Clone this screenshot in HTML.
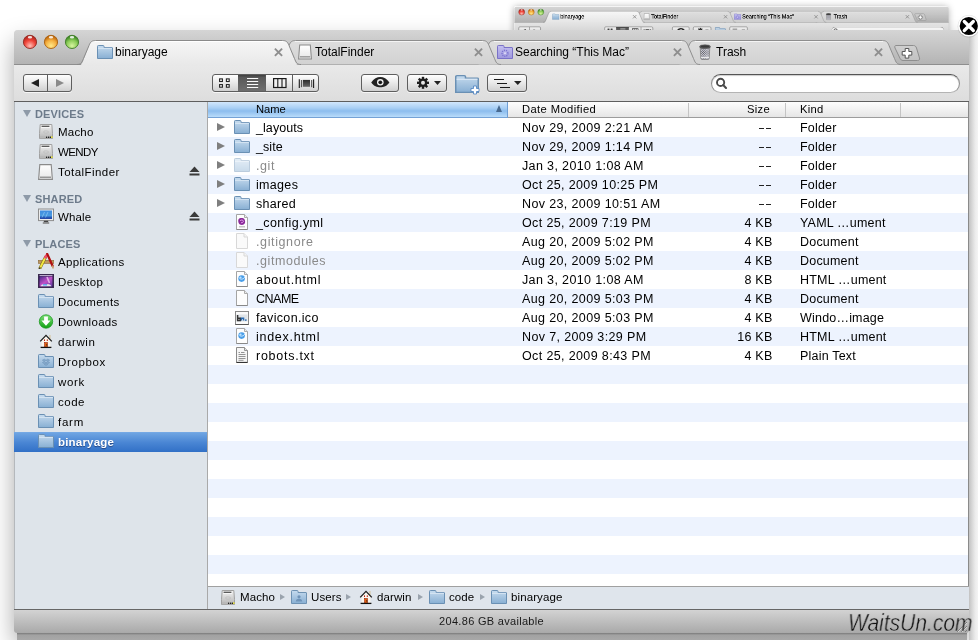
<!DOCTYPE html><html><head><meta charset="utf-8"><style>
*{box-sizing:border-box}
html,body{margin:0;padding:0}
body{width:978px;height:640px;position:relative;overflow:hidden;background:#fff;font-family:"Liberation Sans",sans-serif;color:#000}
.a{position:absolute}
svg.a{overflow:visible}
.tx{position:absolute;white-space:nowrap;will-change:transform}
.mini .tx{-webkit-text-stroke:.3px #000}
</style></head><body>

<svg width="0" height="0" style="position:absolute">
<defs>
<linearGradient id="gFold" x1="0" y1="0" x2="0" y2="1"><stop offset="0" stop-color="#c6dbee"/><stop offset="1" stop-color="#88afd3"/></linearGradient>
<linearGradient id="gFoldT" x1="0" y1="0" x2="0" y2="1"><stop offset="0" stop-color="#a9c4dc"/><stop offset="1" stop-color="#94b4d2"/></linearGradient>
<linearGradient id="gPurp" x1="0" y1="0" x2="0" y2="1"><stop offset="0" stop-color="#c4c0f0"/><stop offset="1" stop-color="#9e98de"/></linearGradient>
<linearGradient id="gHD" x1="0" y1="0" x2="0" y2="1"><stop offset="0" stop-color="#f4f4f4"/><stop offset=".5" stop-color="#d4d4d4"/><stop offset="1" stop-color="#b4b4b4"/></linearGradient>
<linearGradient id="gGreen" x1="0" y1="0" x2="0" y2="1"><stop offset="0" stop-color="#7fe07a"/><stop offset="1" stop-color="#10a012"/></linearGradient>
<linearGradient id="gScreen" x1="0" y1="0" x2="0" y2="1"><stop offset="0" stop-color="#3f8ce0"/><stop offset=".6" stop-color="#4a9ae0"/><stop offset="1" stop-color="#0a2a98"/></linearGradient>
<linearGradient id="gDesk" x1="0" y1="0" x2="1" y2="1"><stop offset="0" stop-color="#4a2a8a"/><stop offset=".5" stop-color="#c050c8"/><stop offset="1" stop-color="#5a3a9a"/></linearGradient>
<linearGradient id="gTrash" x1="0" y1="0" x2="1" y2="0"><stop offset="0" stop-color="#6a6a6a"/><stop offset=".5" stop-color="#d0d0d0"/><stop offset="1" stop-color="#5a5a5a"/></linearGradient>
<linearGradient id="gDisk" x1="0" y1="0" x2="0" y2="1"><stop offset="0" stop-color="#ffffff"/><stop offset="1" stop-color="#e6e6e6"/></linearGradient>

<symbol id="folder" viewBox="0 0 16 14">
 <path d="M0.5 3V1.3C0.5 .8 .8 .5 1.3 .5H6.2C6.7 .5 7 .8 7 1.3V2.5H15C15.3 2.5 15.5 2.7 15.5 3V13.5H0.5Z" fill="url(#gFold)" stroke="#6a90b4" stroke-width="1"/>
 <path d="M1 3.3H15" stroke="#e2edf7" stroke-width=".8"/>
</symbol>
<symbol id="folderP" viewBox="0 0 16 14">
 <path d="M0.5 3V1.3C0.5 .8 .8 .5 1.3 .5H6.2C6.7 .5 7 .8 7 1.3V2.5H15C15.3 2.5 15.5 2.7 15.5 3V13.5H0.5Z" fill="url(#gPurp)" stroke="#7a72c8" stroke-width="1"/>
 <circle cx="8" cy="8.3" r="3" fill="none" stroke="#7c74d0" stroke-width="1.4" stroke-dasharray="1.2 .9"/>
 <circle cx="8" cy="8.3" r="1" fill="#e0ddf8"/>
</symbol>
<symbol id="folderDrop" viewBox="0 0 16 14">
 <path d="M0.5 3V1.3C0.5 .8 .8 .5 1.3 .5H6.2C6.7 .5 7 .8 7 1.3V2.5H15C15.3 2.5 15.5 2.7 15.5 3V13.5H0.5Z" fill="url(#gFold)" stroke="#6a90b4" stroke-width="1"/>
 <path d="M4.3 6.2L6.2 5 8 6.2 6.2 7.4ZM8 6.2L9.8 5 11.7 6.2 9.8 7.4ZM4.3 8.6L6.2 7.4 8 8.6 6.2 9.8ZM8 8.6L9.8 7.4 11.7 8.6 9.8 9.8ZM6.2 10.4L8 9.3 9.8 10.4 8 11.5Z" fill="#87aacb" stroke="#6f94ba" stroke-width=".5"/>
</symbol>
<symbol id="folderUser" viewBox="0 0 16 14">
 <path d="M0.5 3V1.3C0.5 .8 .8 .5 1.3 .5H6.2C6.7 .5 7 .8 7 1.3V2.5H15C15.3 2.5 15.5 2.7 15.5 3V13.5H0.5Z" fill="url(#gFold)" stroke="#6e92b3" stroke-width="1"/>
 <circle cx="8" cy="6.8" r="1.6" fill="#6f93b8"/><path d="M4.8 11.5C5 9.5 6.3 8.8 8 8.8S11 9.5 11.2 11.5Z" fill="#6f93b8"/>
</symbol>
<symbol id="hd" viewBox="0 0 14 15">
 <path d="M1.2 .5H12.8L13.5 9.5V14.5H.5V9.5Z" fill="url(#gHD)" stroke="#a0a0a0" stroke-width="1"/>
 <path d="M2.6 2.3H10.4" stroke="#1e1e1e" stroke-width="1.1"/>
 <path d="M2.2 3.3H11" stroke="#fff" stroke-width=".8"/>
 <ellipse cx="7" cy="8" rx="2.6" ry="1.2" fill="none" stroke="#b8b8b8" stroke-width=".6"/>
 <rect x="1" y="12.3" width="12" height="2" fill="#b8b8b8"/>
 <circle cx="7.6" cy="13.3" r=".7" fill="#111"/><circle cx="9.6" cy="13.3" r=".7" fill="#111"/><circle cx="11.4" cy="13.3" r=".7" fill="#111"/>
 <rect x="12.2" y="12.4" width="1.3" height="1.5" fill="#f4ee10"/>
</symbol>
<symbol id="disk" viewBox="0 0 15 16">
 <path d="M1.8 .6H13.2L14.4 15.4H.6Z" fill="url(#gDisk)" stroke="#8a8a8a" stroke-width="1.1"/>
 <path d="M2 13.2H13" stroke="#7a7a7a" stroke-width="1.1"/>
</symbol>
<symbol id="monitor" viewBox="0 0 16 16">
 <rect x=".5" y="1" width="15" height="11.6" fill="#ececec" stroke="#8e8e8e"/>
 <rect x="2" y="2.5" width="12" height="8.4" fill="url(#gScreen)"/>
 <path d="M4 9.5L6.5 4M7.5 9.5L10 4" stroke="#9ad0f8" stroke-width="1" opacity=".6"/>
 <rect x="5.8" y="12.8" width="4.4" height="1.4" fill="#444"/>
 <rect x="4.8" y="14.3" width="6.4" height="1.4" fill="#777"/>
</symbol>
<symbol id="apps" viewBox="0 0 16 16">
 <rect x=".4" y="7.4" width="15.4" height="3" fill="#bf9860" stroke="#8a6838" stroke-width=".6"/>
 <path d="M2 15.2L7.6 4" stroke="#6a5a10" stroke-width="2.9" stroke-linecap="round"/>
 <path d="M2 15.2L7.6 4" stroke="#f2e640" stroke-width="2"/>
 <path d="M7.3 4.4L8.3 2.4" stroke="#f04a6a" stroke-width="2.4" stroke-linecap="round"/>
 <path d="M1.4 15.8L2.2 14.3" stroke="#333" stroke-width="1.2"/>
 <path d="M9.2 .9L14.6 13" stroke="#b01010" stroke-width="2.3" stroke-linecap="round"/>
 <path d="M14.2 12.6L15.3 15.5" stroke="#c8a070" stroke-width="1.6"/>
</symbol>
<symbol id="desk" viewBox="0 0 16 14">
 <rect x=".5" y=".5" width="15" height="13" fill="#2c1c48" stroke="#3a2a50"/>
 <rect x="1.5" y="2.5" width="13" height="10" fill="url(#gDesk)"/>
 <path d="M1.5 1.6H14.5" stroke="#c8bad8" stroke-width="1"/>
 <path d="M9 3L11.5 9" stroke="#f8d8f8" stroke-width="1.6" opacity=".7"/>
 <path d="M2.5 12.3L4 10.5H12L13.5 12.3Z" fill="#e8e8f0"/>
 <circle cx="6" cy="10.8" r=".9" fill="#3aa0f0"/><circle cx="8" cy="10.8" r=".9" fill="#3aa0f0"/><circle cx="10" cy="10.8" r=".9" fill="#ddd"/>
</symbol>
<symbol id="down" viewBox="0 0 16 16">
 <circle cx="8" cy="8.5" r="6.7" fill="url(#gGreen)" stroke="#1d9a22" stroke-width=".8"/>
 <path d="M6.1 3.6H9.9V7.6H12.6L8 12.8 3.4 7.6H6.1Z" fill="#fff"/>
</symbol>
<symbol id="home" viewBox="0 0 16 16">
 <rect x="11.2" y="2" width="1.4" height="4" fill="#d6c8a8"/>
 <path d="M3.6 7.4L8 3 12.4 7.4V14.2H3.6Z" fill="#faf6ee"/>
 <path d="M2.2 8.4L8 2.4 13.8 8.4" stroke="#1e1e1e" stroke-width="1.3" fill="none"/>
 <rect x="6" y="6.4" width="1" height="1.6" fill="#b82010"/><rect x="8.8" y="6.4" width="1" height="1.6" fill="#b82010"/>
 <rect x="6.6" y="9.6" width="2.8" height="4.6" fill="#e2620e" stroke="#9a2008" stroke-width=".6"/>
 <circle cx="8.8" cy="11.9" r=".55" fill="#111"/>
 <path d="M2.6 14.4H13.4" stroke="#111" stroke-width="1.3"/>
</symbol>
<symbol id="doc" viewBox="0 0 12 16">
 <path d="M.5 .5H8.5L11.5 3.5V15.5H.5Z" fill="#fdfdfd" stroke="#a4a4a4" stroke-width="1"/>
 <path d="M8.5 .5V3.5H11.5" fill="#ececec" stroke="#a4a4a4" stroke-width=".9"/>
 <path d="M.5 15.5H11.5" stroke="#888" stroke-width="1"/>
</symbol>
<symbol id="docF" viewBox="0 0 12 16">
 <path d="M.5 .5H8L11.5 4V15.5H.5Z" fill="#fafafa" stroke="#d8d8d8" stroke-width="1"/>
 <path d="M8 .5V4H11.5" fill="#f4f4f4" stroke="#d8d8d8" stroke-width="1"/>
</symbol>
<symbol id="docHtml" viewBox="0 0 12 16">
 <path d="M.5 .5H8.5L11.5 3.5V15.5H.5Z" fill="#fdfdfd" stroke="#a4a4a4" stroke-width="1"/>
 <path d="M8.5 .5V3.5H11.5" fill="#ececec" stroke="#a4a4a4" stroke-width=".9"/>
 <path d="M.5 15.5H11.5" stroke="#888" stroke-width="1"/>
 <circle cx="5.6" cy="7.6" r="3.3" fill="#4a9ee8"/>
 <path d="M3 6.5C4 8.5 6.5 9 8.8 6.2" stroke="#d8eeff" stroke-width="1" fill="none"/>
 <circle cx="4.6" cy="6.4" r="1" fill="#bfe2ff"/>
</symbol>
<symbol id="docYml" viewBox="0 0 12 16">
 <path d="M.5 .5H8.5L11.5 3.5V15.5H.5Z" fill="#fdfdfd" stroke="#a4a4a4" stroke-width="1"/>
 <path d="M8.5 .5V3.5H11.5" fill="#ececec" stroke="#a4a4a4" stroke-width=".9"/>
 <path d="M.5 15.5H11.5" stroke="#888" stroke-width="1"/>
 <path d="M2.6 5.2C4 3.6 7.5 3.8 8.6 5.4 9.6 7 9.2 9.8 7.6 10.6 5.6 11.4 3.4 10.6 2.8 9.2 2.2 7.8 2 6 2.6 5.2Z" fill="#8a2a9a"/>
 <path d="M4 6.8C5 5.6 7 5.8 7.4 7 7.6 8.2 6.2 9 5 8.6" stroke="#e8a8f0" stroke-width=".9" fill="none"/>
 <path d="M3 12.8H9" stroke="#9a9a9a" stroke-width=".8"/>
</symbol>
<symbol id="docTxt" viewBox="0 0 12 16">
 <path d="M.5 .5H8.5L11.5 3.5V15.5H.5Z" fill="#f6f6f6" stroke="#8a8a8a" stroke-width="1"/>
 <path d="M8.5 .5V3.5H11.5" fill="#e4e4e4" stroke="#8a8a8a" stroke-width=".9"/>
 <path d="M.5 15.5H11.5" stroke="#333" stroke-width="1.2"/>
 <path d="M2.5 5.5H4M5 5.5H8.5M2.5 7.5H9.5M2.5 9.5H9.5M2.5 11.5H9.5M2.5 13.3H7.5" stroke="#6a6a6a" stroke-width=".7"/>
</symbol>
<symbol id="img" viewBox="0 0 14 14">
 <rect x=".5" y=".5" width="13" height="13" fill="#fafafa" stroke="#8a8a8a"/>
 <path d="M.5 13.5H13.5" stroke="#555" stroke-width="1"/>
 <rect x="1.5" y="3.5" width="11" height="7" fill="#e0e4e8"/>
 <path d="M2.6 4V9.6H5.3V7.2H3" stroke="#333" stroke-width="1.5" fill="none"/>
 <path d="M6.4 9.6V7.2H8.6V9.6" stroke="#2a6ab0" stroke-width="1.4" fill="none"/>
 <rect x="10" y="8.4" width="1.6" height="1.4" fill="#2a6ab0"/>
</symbol>
<symbol id="trash" viewBox="0 0 12 16">
 <pattern id="pMesh" width="1.6" height="1.6" patternUnits="userSpaceOnUse" patternTransform="rotate(45)"><rect width="1.6" height="1.6" fill="#c8c8d0"/><rect width=".8" height=".8" fill="#4a4a55"/></pattern>
 <path d="M1.2 3H10.8L10.2 14.5C10.1 15.2 9.6 15.5 9 15.5H3C2.4 15.5 1.9 15.2 1.8 14.5Z" fill="url(#pMesh)" stroke="#777" stroke-width=".7"/>
 <path d="M2 13.6H10" stroke="#eee" stroke-width="1"/>
 <ellipse cx="6" cy="2.7" rx="5.5" ry="1.9" fill="#5a5a5a" stroke="#444" stroke-width=".5"/>
 <ellipse cx="6" cy="2.5" rx="4.2" ry="1.1" fill="#3a3a3a"/>
</symbol>
<symbol id="eject" viewBox="0 0 11 10">
 <path d="M5.5 .5L10.5 6H.5Z" fill="#3a3a3a"/><rect x=".5" y="7.5" width="10" height="2" fill="#3a3a3a"/>
</symbol>
</defs></svg>

<div class="a" style="left:514px;top:6px;width:434px;height:30px;box-shadow:0 1px 7px rgba(0,0,0,.35);border-radius:2px 2px 0 0"></div>
<div class="a mini" style="left:0;top:0;width:978px;height:640px;transform-origin:0 0;transform:translate(508.04px,-7.0px) scale(0.4546)">
<div class="a" style="left:14px;top:30px;width:955px;height:35px;border-radius:4px 4px 0 0;background:linear-gradient(#d5d5d5,#b3b3b3)"></div>
<div class="a" style="left:14px;top:65px;width:955px;height:37px;background:linear-gradient(#e9e9e9,#dddddd);border-bottom:1px solid #5e5e5e"></div>
<svg class="a" style="left:0;top:0" width="978" height="70" viewBox="0 0 978 70"><defs><linearGradient id="gTabA" x1="0" y1="0" x2="0" y2="1"><stop offset="0" stop-color="#f6f6f6"/><stop offset="1" stop-color="#e8e8e8"/></linearGradient><linearGradient id="gTabI" x1="0" y1="0" x2="0" y2="1"><stop offset="0" stop-color="#dedede"/><stop offset="1" stop-color="#d2d2d2"/></linearGradient><linearGradient id="gPlus" x1="0" y1="0" x2="0" y2="1"><stop offset="0" stop-color="#cfcfcf"/><stop offset="1" stop-color="#c2c2c2"/></linearGradient><radialGradient id="gRed" cx=".5" cy=".8" r=".7"><stop offset="0" stop-color="#ffc0b8"/><stop offset=".6" stop-color="#f0453a"/><stop offset="1" stop-color="#b52820"/></radialGradient><radialGradient id="gOr" cx=".5" cy=".8" r=".7"><stop offset="0" stop-color="#ffe98a"/><stop offset=".6" stop-color="#f5b040"/><stop offset="1" stop-color="#c06a10"/></radialGradient><radialGradient id="gGr" cx=".5" cy=".8" r=".7"><stop offset="0" stop-color="#d8f5a0"/><stop offset=".6" stop-color="#8ccc58"/><stop offset="1" stop-color="#3f8a25"/></radialGradient></defs><rect x="14" y="64" width="955" height="1" fill="#8e8e8e"/><path d="M896 45.5H913.5C915 45.5 916 46.5 916.5 48L919.5 58C920 59.5 919.2 60.5 917.5 60.5H903C901.5 60.5 900.5 59.5 900 58.3L895 48C894.5 46.5 894.8 45.5 896 45.5Z" fill="url(#gPlus)" stroke="#8e8e8e" stroke-width="1"/><path d="M905.2 48.5h3.6v3h3v3.6h-3v3h-3.6v-3h-3v-3.6h3z" fill="#fff" stroke="#555" stroke-width="1"/><path d="M677 64.5 C681.5 64.5 682 62.0 683.5 58.5 L689 45.5 C690.5 41.7 692 40.5 695.5 40.5 L882.5 40.5 C886 40.5 887.5 41.7 889 45.5 L894.5 58.5 C896 62.0 896.5 64.5 901 64.5" fill="url(#gTabI)"/><path d="M677 64.5 C681.5 64.5 682 62.0 683.5 58.5 L689 45.5 C690.5 41.7 692 40.5 695.5 40.5 L882.5 40.5 C886 40.5 887.5 41.7 889 45.5 L894.5 58.5 C896 62.0 896.5 64.5 901 64.5" fill="none" stroke="#8e8e8e" stroke-width="1"/><path d="M695 41.5H883" stroke="#f4f4f4" stroke-width="1"/><path d="M874.9 48.699999999999996L882.1 55.9M882.1 48.699999999999996L874.9 55.9" stroke="#8e8e8e" stroke-width="1.9"/><path d="M476 64.5 C480.5 64.5 481 62.0 482.5 58.5 L488 45.5 C489.5 41.7 491 40.5 494.5 40.5 L681.5 40.5 C685 40.5 686.5 41.7 688 45.5 L693.5 58.5 C695 62.0 695.5 64.5 700 64.5" fill="url(#gTabI)"/><path d="M476 64.5 C480.5 64.5 481 62.0 482.5 58.5 L488 45.5 C489.5 41.7 491 40.5 494.5 40.5 L681.5 40.5 C685 40.5 686.5 41.7 688 45.5 L693.5 58.5 C695 62.0 695.5 64.5 700 64.5" fill="none" stroke="#8e8e8e" stroke-width="1"/><path d="M494 41.5H682" stroke="#f4f4f4" stroke-width="1"/><path d="M673.9 48.699999999999996L681.1 55.9M681.1 48.699999999999996L673.9 55.9" stroke="#8e8e8e" stroke-width="1.9"/><path d="M277 64.5 C281.5 64.5 282 62.0 283.5 58.5 L289 45.5 C290.5 41.7 292 40.5 295.5 40.5 L482.5 40.5 C486 40.5 487.5 41.7 489 45.5 L494.5 58.5 C496 62.0 496.5 64.5 501 64.5" fill="url(#gTabI)"/><path d="M277 64.5 C281.5 64.5 282 62.0 283.5 58.5 L289 45.5 C290.5 41.7 292 40.5 295.5 40.5 L482.5 40.5 C486 40.5 487.5 41.7 489 45.5 L494.5 58.5 C496 62.0 496.5 64.5 501 64.5" fill="none" stroke="#8e8e8e" stroke-width="1"/><path d="M295 41.5H483" stroke="#f4f4f4" stroke-width="1"/><path d="M474.9 48.699999999999996L482.1 55.9M482.1 48.699999999999996L474.9 55.9" stroke="#8e8e8e" stroke-width="1.9"/><path d="M77 66 C81.5 66 82 63.5 83.5 60 L89 45.5 C90.5 41.7 92 40.5 95.5 40.5 L282.5 40.5 C286 40.5 287.5 41.7 289 45.5 L294.5 60 C296 63.5 296.5 66 301 66" fill="url(#gTabA)"/><path d="M77 64.5 C81.5 64.5 82 62.0 83.5 58.5 L89 45.5 C90.5 41.7 92 40.5 95.5 40.5 L282.5 40.5 C286 40.5 287.5 41.7 289 45.5 L294.5 58.5 C296 62.0 296.5 64.5 301 64.5" fill="none" stroke="#8a8a8a" stroke-width="1"/><path d="M95 41.5H283" stroke="#fff" stroke-width="1"/><path d="M274.9 48.699999999999996L282.1 55.9M282.1 48.699999999999996L274.9 55.9" stroke="#8e8e8e" stroke-width="1.9"/><circle cx="30" cy="42" r="7.4" fill="#c8c8c8" opacity=".0"/><circle cx="30" cy="41.9" r="6.6" fill="url(#gRed)" stroke="#8e2a22" stroke-width=".9"/><ellipse cx="30" cy="37.3" rx="2.2" ry="1.3" fill="#fff" opacity=".85"/><circle cx="51" cy="42" r="7.4" fill="#c8c8c8" opacity=".0"/><circle cx="51" cy="41.9" r="6.6" fill="url(#gOr)" stroke="#a8600e" stroke-width=".9"/><ellipse cx="51" cy="37.3" rx="2.2" ry="1.3" fill="#fff" opacity=".85"/><circle cx="72" cy="42" r="7.4" fill="#c8c8c8" opacity=".0"/><circle cx="72" cy="41.9" r="6.6" fill="url(#gGr)" stroke="#3e7a26" stroke-width=".9"/><ellipse cx="72" cy="37.3" rx="2.2" ry="1.3" fill="#fff" opacity=".85"/></svg>
<svg class="a" style="left:97px;top:45px" width="16" height="14"><use href="#folder"/></svg>
<div class="tx" style="left:115px;top:44px;font-size:12px;line-height:16px">binaryage</div>
<svg class="a" style="left:298px;top:44px" width="14" height="16"><use href="#disk"/></svg>
<div class="tx" style="left:315px;top:44px;font-size:12px;line-height:16px">TotalFinder</div>
<svg class="a" style="left:497px;top:45px" width="16" height="14"><use href="#folderP"/></svg>
<div class="tx" style="left:515px;top:44px;font-size:12px;line-height:16px">Searching “This Mac”</div>
<svg class="a" style="left:699px;top:44px" width="12" height="16"><use href="#trash"/></svg>
<div class="tx" style="left:716px;top:44px;font-size:12px;line-height:16px">Trash</div>
<div class="a" style="left:23px;top:74px;width:49px;height:18px;border:1px solid #5e5e5e;border-radius:3px;background:linear-gradient(#fefefe,#ebebeb 45%,#d0d0d0);box-shadow:0 1px 0 rgba(255,255,255,.7)"></div>
<div class="a" style="left:47px;top:75px;width:1px;height:16px;background:#5e5e5e"></div>
<div class="a" style="left:31px;top:79px;width:0;height:0;border-top:4.5px solid transparent;border-bottom:4.5px solid transparent;border-right:8px solid #222"></div>
<div class="a" style="left:56px;top:79px;width:0;height:0;border-top:4.5px solid transparent;border-bottom:4.5px solid transparent;border-left:8px solid #8a8a8a"></div>
<div class="a" style="left:212px;top:74px;width:107px;height:18px;border:1px solid #5e5e5e;border-radius:3px;background:linear-gradient(#fefefe,#ebebeb 45%,#d0d0d0);box-shadow:0 1px 0 rgba(255,255,255,.7)"></div>
<div class="a" style="left:238px;top:75px;width:1px;height:16px;background:#5e5e5e"></div>
<div class="a" style="left:265px;top:75px;width:1px;height:16px;background:#5e5e5e"></div>
<div class="a" style="left:292px;top:75px;width:1px;height:16px;background:#5e5e5e"></div>
<svg class="a" style="left:212px;top:74px" width="107" height="18" viewBox="0 0 107 18"><defs><linearGradient id="gSel" x1="0" y1="0" x2="0" y2="1"><stop offset="0" stop-color="#555"/><stop offset="1" stop-color="#6e6e6e"/></linearGradient><linearGradient id="gCF" x1="0" y1="0" x2="0" y2="1"><stop offset="0" stop-color="#2a2a2a"/><stop offset="1" stop-color="#666"/></linearGradient></defs><rect x="26" y="1" width="27.5" height="16" fill="url(#gSel)"/><rect x="26" y="1" width="27.5" height="1.5" fill="#444"/><rect x="7.6" y="4.9" width="2.8" height="2.6" fill="#fff" stroke="#222" stroke-width="1.1"/><rect x="14.4" y="4.9" width="2.8" height="2.6" fill="#fff" stroke="#222" stroke-width="1.1"/><rect x="7.6" y="10.6" width="2.8" height="2.6" fill="#fff" stroke="#222" stroke-width="1.1"/><rect x="14.4" y="10.6" width="2.8" height="2.6" fill="#fff" stroke="#222" stroke-width="1.1"/><path d="M35 4.5H46.2" stroke="#fafafa" stroke-width="1"/><path d="M35 7.5H46.2" stroke="#fafafa" stroke-width="1"/><path d="M35 10.5H46.2" stroke="#fafafa" stroke-width="1"/><path d="M35 13.5H46.2" stroke="#fafafa" stroke-width="1"/><rect x="61.6" y="4.6" width="12.4" height="8.9" fill="#f0f0f0" stroke="#1a1a1a" stroke-width="1.2"/><path d="M65.8 4.6V13.5M70 4.6V13.5" stroke="#1a1a1a" stroke-width="1.1"/><rect x="90.8" y="5.9" width="7.2" height="6.9" fill="url(#gCF)"/><path d="M87.3 5.3V13.9M101.6 5.3V13.9" stroke="#1a1a1a" stroke-width="1.1"/><path d="M89.4 6V13.2M99.7 6V13.2" stroke="#333" stroke-width=".9"/></svg>
<div class="a" style="left:361px;top:74px;width:38px;height:18px;border:1px solid #5e5e5e;border-radius:3px;background:linear-gradient(#fefefe,#ebebeb 45%,#d0d0d0);box-shadow:0 1px 0 rgba(255,255,255,.7)"></div>
<svg class="a" style="left:361px;top:74px" width="38" height="18" viewBox="0 0 38 18"><path d="M10.2 8.4C12.8 4.6 16 3 19.3 3S25.8 4.6 28.4 8.4C25.8 12.2 22.6 13.2 19.3 13.2S12.8 12.2 10.2 8.4Z" fill="#222"/><circle cx="19.3" cy="8.3" r="3.3" fill="#f0f0f0"/><circle cx="19.3" cy="8.3" r="1.9" fill="#222"/><circle cx="19.3" cy="8.3" r=".9" fill="#111"/></svg>
<div class="a" style="left:407px;top:74px;width:40px;height:18px;border:1px solid #5e5e5e;border-radius:3px;background:linear-gradient(#fefefe,#ebebeb 45%,#d0d0d0);box-shadow:0 1px 0 rgba(255,255,255,.7)"></div>
<svg class="a" style="left:407px;top:74px" width="40" height="18" viewBox="0 0 40 18"><g transform="translate(16 8.8)"><circle r="4.3" fill="#1e1e1e"/><rect x="-1.2" y="-6" width="2.4" height="3" fill="#1e1e1e" transform="rotate(0)"/><rect x="-1.2" y="-6" width="2.4" height="3" fill="#1e1e1e" transform="rotate(45)"/><rect x="-1.2" y="-6" width="2.4" height="3" fill="#1e1e1e" transform="rotate(90)"/><rect x="-1.2" y="-6" width="2.4" height="3" fill="#1e1e1e" transform="rotate(135)"/><rect x="-1.2" y="-6" width="2.4" height="3" fill="#1e1e1e" transform="rotate(180)"/><rect x="-1.2" y="-6" width="2.4" height="3" fill="#1e1e1e" transform="rotate(225)"/><rect x="-1.2" y="-6" width="2.4" height="3" fill="#1e1e1e" transform="rotate(270)"/><rect x="-1.2" y="-6" width="2.4" height="3" fill="#1e1e1e" transform="rotate(315)"/><circle r="2" fill="#e6e6e6"/></g><path d="M27 7H34L30.5 11Z" fill="#222"/></svg>
<svg class="a" style="left:455px;top:74.5px" width="24" height="18" viewBox="0 0 16 14" preserveAspectRatio="none"><use href="#folder"/></svg>
<svg class="a" style="left:468.5px;top:84.8px" width="12" height="10" viewBox="0 0 12 10"><path d="M4.5 1h3v2.5H10v3H7.5V9h-3V6.5H2v-3h2.5z" fill="#fff" stroke="#4a80c0" stroke-width=".8"/></svg>
<div class="a" style="left:487px;top:74px;width:40px;height:18px;border:1px solid #5e5e5e;border-radius:3px;background:linear-gradient(#fefefe,#ebebeb 45%,#d0d0d0);box-shadow:0 1px 0 rgba(255,255,255,.7)"></div>
<svg class="a" style="left:487px;top:74px" width="40" height="18" viewBox="0 0 40 18"><path d="M7 5.5H17M10 9.5H20M13 13.5H23" stroke="#1a1a1a" stroke-width="1.1"/><path d="M27 7H34.5L30.75 11Z" fill="#222"/></svg>
<div class="a" style="left:711px;top:74px;width:249px;height:19px;border:1px solid;border-color:#555 #8e8e8e #b4b4b4;border-radius:10px;background:#fff;box-shadow:inset 0 1px 1px rgba(0,0,0,.2)"></div>
<svg class="a" style="left:715px;top:77px" width="14" height="14" viewBox="0 0 14 14"><circle cx="5.6" cy="5.4" r="3.6" fill="none" stroke="#4a4a4a" stroke-width="1.9"/><path d="M8.2 8.1L11 10.9" stroke="#4a4a4a" stroke-width="2.1" stroke-linecap="round"/></svg>
<div class="a" style="left:14px;top:102px;width:194px;height:40px;background:#dee4ea;border-right:1px solid #a9a9a9"></div>
<div class="a" style="left:208px;top:102px;width:761px;height:16px;background:linear-gradient(#fdfdfd,#e6e6e6);border-bottom:1px solid #9c9c9c"></div>
</div>
<div class="a" style="left:14px;top:30px;width:955px;height:603px;box-shadow:0 12px 24px rgba(0,0,0,.34);border-radius:4px 4px 3px 3px;background:#e4e4e4"></div>
<div class="a" style="left:14px;top:30px;width:955px;height:35px;border-radius:4px 4px 0 0;background:linear-gradient(#d5d5d5,#b3b3b3)"></div>
<div class="a" style="left:14px;top:65px;width:955px;height:37px;background:linear-gradient(#e9e9e9,#dddddd);border-bottom:1px solid #5e5e5e"></div>
<svg class="a" style="left:0;top:0" width="978" height="70" viewBox="0 0 978 70"><defs><linearGradient id="gTabA" x1="0" y1="0" x2="0" y2="1"><stop offset="0" stop-color="#f6f6f6"/><stop offset="1" stop-color="#e8e8e8"/></linearGradient><linearGradient id="gTabI" x1="0" y1="0" x2="0" y2="1"><stop offset="0" stop-color="#dedede"/><stop offset="1" stop-color="#d2d2d2"/></linearGradient><linearGradient id="gPlus" x1="0" y1="0" x2="0" y2="1"><stop offset="0" stop-color="#cfcfcf"/><stop offset="1" stop-color="#c2c2c2"/></linearGradient><radialGradient id="gRed" cx=".5" cy=".8" r=".7"><stop offset="0" stop-color="#ffc0b8"/><stop offset=".6" stop-color="#f0453a"/><stop offset="1" stop-color="#b52820"/></radialGradient><radialGradient id="gOr" cx=".5" cy=".8" r=".7"><stop offset="0" stop-color="#ffe98a"/><stop offset=".6" stop-color="#f5b040"/><stop offset="1" stop-color="#c06a10"/></radialGradient><radialGradient id="gGr" cx=".5" cy=".8" r=".7"><stop offset="0" stop-color="#d8f5a0"/><stop offset=".6" stop-color="#8ccc58"/><stop offset="1" stop-color="#3f8a25"/></radialGradient></defs><rect x="14" y="64" width="955" height="1" fill="#8e8e8e"/><path d="M896 45.5H913.5C915 45.5 916 46.5 916.5 48L919.5 58C920 59.5 919.2 60.5 917.5 60.5H903C901.5 60.5 900.5 59.5 900 58.3L895 48C894.5 46.5 894.8 45.5 896 45.5Z" fill="url(#gPlus)" stroke="#8e8e8e" stroke-width="1"/><path d="M905.2 48.5h3.6v3h3v3.6h-3v3h-3.6v-3h-3v-3.6h3z" fill="#fff" stroke="#555" stroke-width="1"/><path d="M677 64.5 C681.5 64.5 682 62.0 683.5 58.5 L689 45.5 C690.5 41.7 692 40.5 695.5 40.5 L882.5 40.5 C886 40.5 887.5 41.7 889 45.5 L894.5 58.5 C896 62.0 896.5 64.5 901 64.5" fill="url(#gTabI)"/><path d="M677 64.5 C681.5 64.5 682 62.0 683.5 58.5 L689 45.5 C690.5 41.7 692 40.5 695.5 40.5 L882.5 40.5 C886 40.5 887.5 41.7 889 45.5 L894.5 58.5 C896 62.0 896.5 64.5 901 64.5" fill="none" stroke="#8e8e8e" stroke-width="1"/><path d="M695 41.5H883" stroke="#f4f4f4" stroke-width="1"/><path d="M874.9 48.699999999999996L882.1 55.9M882.1 48.699999999999996L874.9 55.9" stroke="#8e8e8e" stroke-width="1.9"/><path d="M476 64.5 C480.5 64.5 481 62.0 482.5 58.5 L488 45.5 C489.5 41.7 491 40.5 494.5 40.5 L681.5 40.5 C685 40.5 686.5 41.7 688 45.5 L693.5 58.5 C695 62.0 695.5 64.5 700 64.5" fill="url(#gTabI)"/><path d="M476 64.5 C480.5 64.5 481 62.0 482.5 58.5 L488 45.5 C489.5 41.7 491 40.5 494.5 40.5 L681.5 40.5 C685 40.5 686.5 41.7 688 45.5 L693.5 58.5 C695 62.0 695.5 64.5 700 64.5" fill="none" stroke="#8e8e8e" stroke-width="1"/><path d="M494 41.5H682" stroke="#f4f4f4" stroke-width="1"/><path d="M673.9 48.699999999999996L681.1 55.9M681.1 48.699999999999996L673.9 55.9" stroke="#8e8e8e" stroke-width="1.9"/><path d="M277 64.5 C281.5 64.5 282 62.0 283.5 58.5 L289 45.5 C290.5 41.7 292 40.5 295.5 40.5 L482.5 40.5 C486 40.5 487.5 41.7 489 45.5 L494.5 58.5 C496 62.0 496.5 64.5 501 64.5" fill="url(#gTabI)"/><path d="M277 64.5 C281.5 64.5 282 62.0 283.5 58.5 L289 45.5 C290.5 41.7 292 40.5 295.5 40.5 L482.5 40.5 C486 40.5 487.5 41.7 489 45.5 L494.5 58.5 C496 62.0 496.5 64.5 501 64.5" fill="none" stroke="#8e8e8e" stroke-width="1"/><path d="M295 41.5H483" stroke="#f4f4f4" stroke-width="1"/><path d="M474.9 48.699999999999996L482.1 55.9M482.1 48.699999999999996L474.9 55.9" stroke="#8e8e8e" stroke-width="1.9"/><path d="M77 66 C81.5 66 82 63.5 83.5 60 L89 45.5 C90.5 41.7 92 40.5 95.5 40.5 L282.5 40.5 C286 40.5 287.5 41.7 289 45.5 L294.5 60 C296 63.5 296.5 66 301 66" fill="url(#gTabA)"/><path d="M77 64.5 C81.5 64.5 82 62.0 83.5 58.5 L89 45.5 C90.5 41.7 92 40.5 95.5 40.5 L282.5 40.5 C286 40.5 287.5 41.7 289 45.5 L294.5 58.5 C296 62.0 296.5 64.5 301 64.5" fill="none" stroke="#8a8a8a" stroke-width="1"/><path d="M95 41.5H283" stroke="#fff" stroke-width="1"/><path d="M274.9 48.699999999999996L282.1 55.9M282.1 48.699999999999996L274.9 55.9" stroke="#8e8e8e" stroke-width="1.9"/><circle cx="30" cy="42" r="7.4" fill="#c8c8c8" opacity=".0"/><circle cx="30" cy="41.9" r="6.6" fill="url(#gRed)" stroke="#8e2a22" stroke-width=".9"/><ellipse cx="30" cy="37.3" rx="2.2" ry="1.3" fill="#fff" opacity=".85"/><circle cx="51" cy="42" r="7.4" fill="#c8c8c8" opacity=".0"/><circle cx="51" cy="41.9" r="6.6" fill="url(#gOr)" stroke="#a8600e" stroke-width=".9"/><ellipse cx="51" cy="37.3" rx="2.2" ry="1.3" fill="#fff" opacity=".85"/><circle cx="72" cy="42" r="7.4" fill="#c8c8c8" opacity=".0"/><circle cx="72" cy="41.9" r="6.6" fill="url(#gGr)" stroke="#3e7a26" stroke-width=".9"/><ellipse cx="72" cy="37.3" rx="2.2" ry="1.3" fill="#fff" opacity=".85"/></svg>
<svg class="a" style="left:97px;top:45px" width="16" height="14"><use href="#folder"/></svg>
<div class="tx" style="left:115px;top:44px;font-size:12px;line-height:16px">binaryage</div>
<svg class="a" style="left:298px;top:44px" width="14" height="16"><use href="#disk"/></svg>
<div class="tx" style="left:315px;top:44px;font-size:12px;line-height:16px">TotalFinder</div>
<svg class="a" style="left:497px;top:45px" width="16" height="14"><use href="#folderP"/></svg>
<div class="tx" style="left:515px;top:44px;font-size:12px;line-height:16px">Searching “This Mac”</div>
<svg class="a" style="left:699px;top:44px" width="12" height="16"><use href="#trash"/></svg>
<div class="tx" style="left:716px;top:44px;font-size:12px;line-height:16px">Trash</div>
<div class="a" style="left:23px;top:74px;width:49px;height:18px;border:1px solid #5e5e5e;border-radius:3px;background:linear-gradient(#fefefe,#ebebeb 45%,#d0d0d0);box-shadow:0 1px 0 rgba(255,255,255,.7)"></div>
<div class="a" style="left:47px;top:75px;width:1px;height:16px;background:#5e5e5e"></div>
<div class="a" style="left:31px;top:79px;width:0;height:0;border-top:4.5px solid transparent;border-bottom:4.5px solid transparent;border-right:8px solid #222"></div>
<div class="a" style="left:56px;top:79px;width:0;height:0;border-top:4.5px solid transparent;border-bottom:4.5px solid transparent;border-left:8px solid #8a8a8a"></div>
<div class="a" style="left:212px;top:74px;width:107px;height:18px;border:1px solid #5e5e5e;border-radius:3px;background:linear-gradient(#fefefe,#ebebeb 45%,#d0d0d0);box-shadow:0 1px 0 rgba(255,255,255,.7)"></div>
<div class="a" style="left:238px;top:75px;width:1px;height:16px;background:#5e5e5e"></div>
<div class="a" style="left:265px;top:75px;width:1px;height:16px;background:#5e5e5e"></div>
<div class="a" style="left:292px;top:75px;width:1px;height:16px;background:#5e5e5e"></div>
<svg class="a" style="left:212px;top:74px" width="107" height="18" viewBox="0 0 107 18"><defs><linearGradient id="gSel" x1="0" y1="0" x2="0" y2="1"><stop offset="0" stop-color="#555"/><stop offset="1" stop-color="#6e6e6e"/></linearGradient><linearGradient id="gCF" x1="0" y1="0" x2="0" y2="1"><stop offset="0" stop-color="#2a2a2a"/><stop offset="1" stop-color="#666"/></linearGradient></defs><rect x="26" y="1" width="27.5" height="16" fill="url(#gSel)"/><rect x="26" y="1" width="27.5" height="1.5" fill="#444"/><rect x="7.6" y="4.9" width="2.8" height="2.6" fill="#fff" stroke="#222" stroke-width="1.1"/><rect x="14.4" y="4.9" width="2.8" height="2.6" fill="#fff" stroke="#222" stroke-width="1.1"/><rect x="7.6" y="10.6" width="2.8" height="2.6" fill="#fff" stroke="#222" stroke-width="1.1"/><rect x="14.4" y="10.6" width="2.8" height="2.6" fill="#fff" stroke="#222" stroke-width="1.1"/><path d="M35 4.5H46.2" stroke="#fafafa" stroke-width="1"/><path d="M35 7.5H46.2" stroke="#fafafa" stroke-width="1"/><path d="M35 10.5H46.2" stroke="#fafafa" stroke-width="1"/><path d="M35 13.5H46.2" stroke="#fafafa" stroke-width="1"/><rect x="61.6" y="4.6" width="12.4" height="8.9" fill="#f0f0f0" stroke="#1a1a1a" stroke-width="1.2"/><path d="M65.8 4.6V13.5M70 4.6V13.5" stroke="#1a1a1a" stroke-width="1.1"/><rect x="90.8" y="5.9" width="7.2" height="6.9" fill="url(#gCF)"/><path d="M87.3 5.3V13.9M101.6 5.3V13.9" stroke="#1a1a1a" stroke-width="1.1"/><path d="M89.4 6V13.2M99.7 6V13.2" stroke="#333" stroke-width=".9"/></svg>
<div class="a" style="left:361px;top:74px;width:38px;height:18px;border:1px solid #5e5e5e;border-radius:3px;background:linear-gradient(#fefefe,#ebebeb 45%,#d0d0d0);box-shadow:0 1px 0 rgba(255,255,255,.7)"></div>
<svg class="a" style="left:361px;top:74px" width="38" height="18" viewBox="0 0 38 18"><path d="M10.2 8.4C12.8 4.6 16 3 19.3 3S25.8 4.6 28.4 8.4C25.8 12.2 22.6 13.2 19.3 13.2S12.8 12.2 10.2 8.4Z" fill="#222"/><circle cx="19.3" cy="8.3" r="3.3" fill="#f0f0f0"/><circle cx="19.3" cy="8.3" r="1.9" fill="#222"/><circle cx="19.3" cy="8.3" r=".9" fill="#111"/></svg>
<div class="a" style="left:407px;top:74px;width:40px;height:18px;border:1px solid #5e5e5e;border-radius:3px;background:linear-gradient(#fefefe,#ebebeb 45%,#d0d0d0);box-shadow:0 1px 0 rgba(255,255,255,.7)"></div>
<svg class="a" style="left:407px;top:74px" width="40" height="18" viewBox="0 0 40 18"><g transform="translate(16 8.8)"><circle r="4.3" fill="#1e1e1e"/><rect x="-1.2" y="-6" width="2.4" height="3" fill="#1e1e1e" transform="rotate(0)"/><rect x="-1.2" y="-6" width="2.4" height="3" fill="#1e1e1e" transform="rotate(45)"/><rect x="-1.2" y="-6" width="2.4" height="3" fill="#1e1e1e" transform="rotate(90)"/><rect x="-1.2" y="-6" width="2.4" height="3" fill="#1e1e1e" transform="rotate(135)"/><rect x="-1.2" y="-6" width="2.4" height="3" fill="#1e1e1e" transform="rotate(180)"/><rect x="-1.2" y="-6" width="2.4" height="3" fill="#1e1e1e" transform="rotate(225)"/><rect x="-1.2" y="-6" width="2.4" height="3" fill="#1e1e1e" transform="rotate(270)"/><rect x="-1.2" y="-6" width="2.4" height="3" fill="#1e1e1e" transform="rotate(315)"/><circle r="2" fill="#e6e6e6"/></g><path d="M27 7H34L30.5 11Z" fill="#222"/></svg>
<svg class="a" style="left:455px;top:74.5px" width="24" height="18" viewBox="0 0 16 14" preserveAspectRatio="none"><use href="#folder"/></svg>
<svg class="a" style="left:468.5px;top:84.8px" width="12" height="10" viewBox="0 0 12 10"><path d="M4.5 1h3v2.5H10v3H7.5V9h-3V6.5H2v-3h2.5z" fill="#fff" stroke="#4a80c0" stroke-width=".8"/></svg>
<div class="a" style="left:487px;top:74px;width:40px;height:18px;border:1px solid #5e5e5e;border-radius:3px;background:linear-gradient(#fefefe,#ebebeb 45%,#d0d0d0);box-shadow:0 1px 0 rgba(255,255,255,.7)"></div>
<svg class="a" style="left:487px;top:74px" width="40" height="18" viewBox="0 0 40 18"><path d="M7 5.5H17M10 9.5H20M13 13.5H23" stroke="#1a1a1a" stroke-width="1.1"/><path d="M27 7H34.5L30.75 11Z" fill="#222"/></svg>
<div class="a" style="left:711px;top:74px;width:249px;height:19px;border:1px solid;border-color:#555 #8e8e8e #b4b4b4;border-radius:10px;background:#fff;box-shadow:inset 0 1px 1px rgba(0,0,0,.2)"></div>
<svg class="a" style="left:715px;top:77px" width="14" height="14" viewBox="0 0 14 14"><circle cx="5.6" cy="5.4" r="3.6" fill="none" stroke="#4a4a4a" stroke-width="1.9"/><path d="M8.2 8.1L11 10.9" stroke="#4a4a4a" stroke-width="2.1" stroke-linecap="round"/></svg>
<div class="a" style="left:14px;top:102px;width:194px;height:40px;background:#dee4ea;border-right:1px solid #a9a9a9"></div>
<div class="a" style="left:208px;top:102px;width:761px;height:16px;background:linear-gradient(#fdfdfd,#e6e6e6);border-bottom:1px solid #9c9c9c"></div>
<div class="a" style="left:969px;top:32px;width:9px;height:608px;background:linear-gradient(to right,#c2c2c2,#d8d8d8 35%,#ececec 70%,#f4f4f4)"></div>
<div class="a" style="left:14px;top:102px;width:194px;height:507px;background:#dee4ea;border-right:1px solid #a9a9a9;border-left:1px solid #b4b8bc"></div>
<div class="a" style="left:23px;top:110px;width:0;height:0;border-left:4.5px solid transparent;border-right:4.5px solid transparent;border-top:7.5px solid #8e9aa8"></div>
<div class="tx" style="left:35px;top:107px;font-size:11px;line-height:14px;font-weight:bold;color:#6d7b8b;letter-spacing:.15px">DEVICES</div>
<svg class="a" style="left:39px;top:124px" width="14" height="15"><use href="#hd"/></svg>
<div class="tx" style="left:58px;top:124px;font-size:11.5px;line-height:16px;letter-spacing:0.2px;color:#000;">Macho</div>
<svg class="a" style="left:39px;top:144px" width="14" height="15"><use href="#hd"/></svg>
<div class="tx" style="left:58px;top:144px;font-size:11.5px;line-height:16px;letter-spacing:-0.6px;color:#000;">WENDY</div>
<svg class="a" style="left:38px;top:164px" width="15" height="16"><use href="#disk"/></svg>
<div class="tx" style="left:58px;top:164px;font-size:11.5px;line-height:16px;letter-spacing:0.45px;color:#000;">TotalFinder</div>
<svg class="a" style="left:189px;top:166px" width="11" height="10"><use href="#eject"/></svg>
<div class="a" style="left:23px;top:195px;width:0;height:0;border-left:4.5px solid transparent;border-right:4.5px solid transparent;border-top:7.5px solid #8e9aa8"></div>
<div class="tx" style="left:35px;top:192px;font-size:11px;line-height:14px;font-weight:bold;color:#6d7b8b;letter-spacing:.15px">SHARED</div>
<svg class="a" style="left:38px;top:208px" width="16" height="16"><use href="#monitor"/></svg>
<div class="tx" style="left:58px;top:209px;font-size:11.5px;line-height:16px;letter-spacing:0.15px;color:#000;">Whale</div>
<svg class="a" style="left:189px;top:211px" width="11" height="10"><use href="#eject"/></svg>
<div class="a" style="left:23px;top:240px;width:0;height:0;border-left:4.5px solid transparent;border-right:4.5px solid transparent;border-top:7.5px solid #8e9aa8"></div>
<div class="tx" style="left:35px;top:237px;font-size:11px;line-height:14px;font-weight:bold;color:#6d7b8b;letter-spacing:.15px">PLACES</div>
<svg class="a" style="left:38px;top:253px" width="16" height="16"><use href="#apps"/></svg>
<div class="tx" style="left:58px;top:254px;font-size:11.5px;line-height:16px;letter-spacing:0.38px;color:#000;">Applications</div>
<svg class="a" style="left:38px;top:274px" width="16" height="14"><use href="#desk"/></svg>
<div class="tx" style="left:58px;top:274px;font-size:11.5px;line-height:16px;letter-spacing:0.45px;color:#000;">Desktop</div>
<svg class="a" style="left:38px;top:294px" width="16" height="14"><use href="#folder"/></svg>
<div class="tx" style="left:58px;top:294px;font-size:11.5px;line-height:16px;letter-spacing:0.38px;color:#000;">Documents</div>
<svg class="a" style="left:38px;top:313px" width="16" height="16"><use href="#down"/></svg>
<div class="tx" style="left:58px;top:314px;font-size:11.5px;line-height:16px;letter-spacing:0.3px;color:#000;">Downloads</div>
<svg class="a" style="left:38px;top:333px" width="16" height="16"><use href="#home"/></svg>
<div class="tx" style="left:58px;top:334px;font-size:11.5px;line-height:16px;letter-spacing:0.6px;color:#000;">darwin</div>
<svg class="a" style="left:38px;top:354px" width="16" height="14"><use href="#folderDrop"/></svg>
<div class="tx" style="left:58px;top:354px;font-size:11.5px;line-height:16px;letter-spacing:0.65px;color:#000;">Dropbox</div>
<svg class="a" style="left:38px;top:374px" width="16" height="14"><use href="#folder"/></svg>
<div class="tx" style="left:58px;top:374px;font-size:11.5px;line-height:16px;letter-spacing:0.65px;color:#000;">work</div>
<svg class="a" style="left:38px;top:394px" width="16" height="14"><use href="#folder"/></svg>
<div class="tx" style="left:58px;top:394px;font-size:11.5px;line-height:16px;letter-spacing:0.5px;color:#000;">code</div>
<svg class="a" style="left:38px;top:414px" width="16" height="14"><use href="#folder"/></svg>
<div class="tx" style="left:58px;top:414px;font-size:11.5px;line-height:16px;letter-spacing:0.75px;color:#000;">farm</div>
<div class="a" style="left:14px;top:432px;width:193px;height:20px;background:linear-gradient(#6ea4e2,#4a86d4 50%,#3170c6);border-top:1px solid #74a8e4"></div>
<svg class="a" style="left:38px;top:434px" width="16" height="14"><use href="#folder"/></svg>
<div class="tx" style="left:58px;top:434px;font-size:11.5px;line-height:16px;letter-spacing:0.2px;color:#fff;font-weight:bold;text-shadow:0 1px 1px rgba(0,0,40,.45);">binaryage</div>
<div class="a" style="left:208px;top:102px;width:761px;height:484px;background:#fff"></div>
<div class="a" style="left:208px;top:137px;width:761px;height:19px;background:#edf3fe"></div>
<div class="a" style="left:208px;top:175px;width:761px;height:19px;background:#edf3fe"></div>
<div class="a" style="left:208px;top:213px;width:761px;height:19px;background:#edf3fe"></div>
<div class="a" style="left:208px;top:251px;width:761px;height:19px;background:#edf3fe"></div>
<div class="a" style="left:208px;top:289px;width:761px;height:19px;background:#edf3fe"></div>
<div class="a" style="left:208px;top:327px;width:761px;height:19px;background:#edf3fe"></div>
<div class="a" style="left:208px;top:365px;width:761px;height:19px;background:#edf3fe"></div>
<div class="a" style="left:208px;top:403px;width:761px;height:19px;background:#edf3fe"></div>
<div class="a" style="left:208px;top:441px;width:761px;height:19px;background:#edf3fe"></div>
<div class="a" style="left:208px;top:479px;width:761px;height:19px;background:#edf3fe"></div>
<div class="a" style="left:208px;top:517px;width:761px;height:19px;background:#edf3fe"></div>
<div class="a" style="left:208px;top:555px;width:761px;height:19px;background:#edf3fe"></div>
<div class="a" style="left:208px;top:102px;width:761px;height:16px;background:linear-gradient(#fdfdfd,#e6e6e6);border-bottom:1px solid #9c9c9c"></div>
<div class="a" style="left:208px;top:102px;width:300px;height:16px;background:linear-gradient(#d2e7fc,#a9cff4 40%,#8cbdee 60%,#b9dcfa);border-bottom:1px solid #74a2d6;border-right:1px solid #6f9fd6"></div>
<div class="a" style="left:688px;top:103px;width:1px;height:14px;background:#c4c4c4"></div>
<div class="a" style="left:785px;top:103px;width:1px;height:14px;background:#c4c4c4"></div>
<div class="a" style="left:900px;top:103px;width:1px;height:14px;background:#c4c4c4"></div>
<div class="tx" style="left:256px;top:102px;font-size:11.2px;line-height:15px">Name</div>
<div class="a" style="left:495.5px;top:105px;width:0;height:0;border-left:3.6px solid transparent;border-right:3.6px solid transparent;border-bottom:7px solid #486a90"></div>
<div class="tx" style="left:522px;top:102px;font-size:11.2px;line-height:15px;letter-spacing:.4px">Date Modified</div>
<div class="tx" style="left:688px;width:82px;text-align:right;top:102px;font-size:11.2px;line-height:15px;letter-spacing:.3px">Size</div>
<div class="tx" style="left:800px;top:102px;font-size:11.2px;line-height:15px;letter-spacing:.3px">Kind</div>
<div class="a" style="left:217px;top:123px;width:0;height:0;border-top:4.5px solid transparent;border-bottom:4.5px solid transparent;border-left:8px solid #7f7f7f"></div>
<svg class="a" style="left:234px;top:120px" width="16" height="14"><use href="#folder"/></svg>
<div class="tx" style="left:256px;top:119px;font-size:12.5px;line-height:19px;letter-spacing:0.07px;color:#000">_layouts</div>
<div class="tx" style="left:522px;top:119px;font-size:12.5px;line-height:19px;letter-spacing:.37px;color:#000">Nov 29, 2009 2:21 AM</div>
<div class="a" style="left:759px;top:128px;width:5px;height:1.2px;background:#222"></div><div class="a" style="left:766px;top:128px;width:5px;height:1.2px;background:#222"></div>
<div class="tx" style="left:800px;top:119px;font-size:12.5px;line-height:19px;letter-spacing:.2px;color:#000">Folder</div>
<div class="a" style="left:217px;top:142px;width:0;height:0;border-top:4.5px solid transparent;border-bottom:4.5px solid transparent;border-left:8px solid #7f7f7f"></div>
<svg class="a" style="left:234px;top:139px" width="16" height="14"><use href="#folder"/></svg>
<div class="tx" style="left:256px;top:138px;font-size:12.5px;line-height:19px;letter-spacing:0.05px;color:#000">_site</div>
<div class="tx" style="left:522px;top:138px;font-size:12.5px;line-height:19px;letter-spacing:.37px;color:#000">Nov 29, 2009 1:14 PM</div>
<div class="a" style="left:759px;top:147px;width:5px;height:1.2px;background:#222"></div><div class="a" style="left:766px;top:147px;width:5px;height:1.2px;background:#222"></div>
<div class="tx" style="left:800px;top:138px;font-size:12.5px;line-height:19px;letter-spacing:.2px;color:#000">Folder</div>
<div class="a" style="left:217px;top:161px;width:0;height:0;border-top:4.5px solid transparent;border-bottom:4.5px solid transparent;border-left:8px solid #7f7f7f"></div>
<svg class="a" style="left:234px;top:158px;opacity:.45" width="16" height="14"><use href="#folder"/></svg>
<div class="tx" style="left:256px;top:157px;font-size:12.5px;line-height:19px;letter-spacing:0.6px;color:#8a8a8a">.git</div>
<div class="tx" style="left:522px;top:157px;font-size:12.5px;line-height:19px;letter-spacing:.37px;color:#000">Jan 3, 2010 1:08 AM</div>
<div class="a" style="left:759px;top:166px;width:5px;height:1.2px;background:#222"></div><div class="a" style="left:766px;top:166px;width:5px;height:1.2px;background:#222"></div>
<div class="tx" style="left:800px;top:157px;font-size:12.5px;line-height:19px;letter-spacing:.2px;color:#000">Folder</div>
<div class="a" style="left:217px;top:180px;width:0;height:0;border-top:4.5px solid transparent;border-bottom:4.5px solid transparent;border-left:8px solid #7f7f7f"></div>
<svg class="a" style="left:234px;top:177px" width="16" height="14"><use href="#folder"/></svg>
<div class="tx" style="left:256px;top:176px;font-size:12.5px;line-height:19px;letter-spacing:0.32px;color:#000">images</div>
<div class="tx" style="left:522px;top:176px;font-size:12.5px;line-height:19px;letter-spacing:.37px;color:#000">Oct 25, 2009 10:25 PM</div>
<div class="a" style="left:759px;top:185px;width:5px;height:1.2px;background:#222"></div><div class="a" style="left:766px;top:185px;width:5px;height:1.2px;background:#222"></div>
<div class="tx" style="left:800px;top:176px;font-size:12.5px;line-height:19px;letter-spacing:.2px;color:#000">Folder</div>
<div class="a" style="left:217px;top:199px;width:0;height:0;border-top:4.5px solid transparent;border-bottom:4.5px solid transparent;border-left:8px solid #7f7f7f"></div>
<svg class="a" style="left:234px;top:196px" width="16" height="14"><use href="#folder"/></svg>
<div class="tx" style="left:256px;top:195px;font-size:12.5px;line-height:19px;letter-spacing:0.32px;color:#000">shared</div>
<div class="tx" style="left:522px;top:195px;font-size:12.5px;line-height:19px;letter-spacing:.37px;color:#000">Nov 23, 2009 10:51 AM</div>
<div class="a" style="left:759px;top:204px;width:5px;height:1.2px;background:#222"></div><div class="a" style="left:766px;top:204px;width:5px;height:1.2px;background:#222"></div>
<div class="tx" style="left:800px;top:195px;font-size:12.5px;line-height:19px;letter-spacing:.2px;color:#000">Folder</div>
<svg class="a" style="left:236px;top:214px" width="12" height="16"><use href="#docYml"/></svg>
<div class="tx" style="left:256px;top:214px;font-size:12.5px;line-height:19px;letter-spacing:0.39px;color:#000">_config.yml</div>
<div class="tx" style="left:522px;top:214px;font-size:12.5px;line-height:19px;letter-spacing:.37px;color:#000">Oct 25, 2009 7:19 PM</div>
<div class="tx" style="left:640px;width:132.5px;text-align:right;top:214px;font-size:12.5px;line-height:19px;letter-spacing:.25px;color:#000">4 KB</div>
<div class="tx" style="left:800px;top:214px;font-size:12.5px;line-height:19px;letter-spacing:.2px;color:#000">YAML …ument</div>
<svg class="a" style="left:236px;top:233px" width="12" height="16"><use href="#docF"/></svg>
<div class="tx" style="left:256px;top:233px;font-size:12.5px;line-height:19px;letter-spacing:0.62px;color:#8a8a8a">.gitignore</div>
<div class="tx" style="left:522px;top:233px;font-size:12.5px;line-height:19px;letter-spacing:.37px;color:#000">Aug 20, 2009 5:02 PM</div>
<div class="tx" style="left:640px;width:132.5px;text-align:right;top:233px;font-size:12.5px;line-height:19px;letter-spacing:.25px;color:#000">4 KB</div>
<div class="tx" style="left:800px;top:233px;font-size:12.5px;line-height:19px;letter-spacing:.2px;color:#000">Document</div>
<svg class="a" style="left:236px;top:252px" width="12" height="16"><use href="#docF"/></svg>
<div class="tx" style="left:256px;top:252px;font-size:12.5px;line-height:19px;letter-spacing:0.56px;color:#8a8a8a">.gitmodules</div>
<div class="tx" style="left:522px;top:252px;font-size:12.5px;line-height:19px;letter-spacing:.37px;color:#000">Aug 20, 2009 5:02 PM</div>
<div class="tx" style="left:640px;width:132.5px;text-align:right;top:252px;font-size:12.5px;line-height:19px;letter-spacing:.25px;color:#000">4 KB</div>
<div class="tx" style="left:800px;top:252px;font-size:12.5px;line-height:19px;letter-spacing:.2px;color:#000">Document</div>
<svg class="a" style="left:236px;top:271px" width="12" height="16"><use href="#docHtml"/></svg>
<div class="tx" style="left:256px;top:271px;font-size:12.5px;line-height:19px;letter-spacing:0.68px;color:#000">about.html</div>
<div class="tx" style="left:522px;top:271px;font-size:12.5px;line-height:19px;letter-spacing:.37px;color:#000">Jan 3, 2010 1:08 AM</div>
<div class="tx" style="left:640px;width:132.5px;text-align:right;top:271px;font-size:12.5px;line-height:19px;letter-spacing:.25px;color:#000">8 KB</div>
<div class="tx" style="left:800px;top:271px;font-size:12.5px;line-height:19px;letter-spacing:.2px;color:#000">HTML …ument</div>
<svg class="a" style="left:236px;top:290px" width="12" height="16"><use href="#doc"/></svg>
<div class="tx" style="left:256px;top:290px;font-size:12.5px;line-height:19px;letter-spacing:-0.5px;color:#000">CNAME</div>
<div class="tx" style="left:522px;top:290px;font-size:12.5px;line-height:19px;letter-spacing:.37px;color:#000">Aug 20, 2009 5:03 PM</div>
<div class="tx" style="left:640px;width:132.5px;text-align:right;top:290px;font-size:12.5px;line-height:19px;letter-spacing:.25px;color:#000">4 KB</div>
<div class="tx" style="left:800px;top:290px;font-size:12.5px;line-height:19px;letter-spacing:.2px;color:#000">Document</div>
<svg class="a" style="left:235px;top:311px" width="14" height="14"><use href="#img"/></svg>
<div class="tx" style="left:256px;top:309px;font-size:12.5px;line-height:19px;letter-spacing:0.33px;color:#000">favicon.ico</div>
<div class="tx" style="left:522px;top:309px;font-size:12.5px;line-height:19px;letter-spacing:.37px;color:#000">Aug 20, 2009 5:03 PM</div>
<div class="tx" style="left:640px;width:132.5px;text-align:right;top:309px;font-size:12.5px;line-height:19px;letter-spacing:.25px;color:#000">4 KB</div>
<div class="tx" style="left:800px;top:309px;font-size:12.5px;line-height:19px;letter-spacing:.2px;color:#000">Windo…image</div>
<svg class="a" style="left:236px;top:328px" width="12" height="16"><use href="#docHtml"/></svg>
<div class="tx" style="left:256px;top:328px;font-size:12.5px;line-height:19px;letter-spacing:0.72px;color:#000">index.html</div>
<div class="tx" style="left:522px;top:328px;font-size:12.5px;line-height:19px;letter-spacing:.37px;color:#000">Nov 7, 2009 3:29 PM</div>
<div class="tx" style="left:640px;width:132.5px;text-align:right;top:328px;font-size:12.5px;line-height:19px;letter-spacing:.25px;color:#000">16 KB</div>
<div class="tx" style="left:800px;top:328px;font-size:12.5px;line-height:19px;letter-spacing:.2px;color:#000">HTML …ument</div>
<svg class="a" style="left:236px;top:347px" width="12" height="16"><use href="#docTxt"/></svg>
<div class="tx" style="left:256px;top:347px;font-size:12.5px;line-height:19px;letter-spacing:0.74px;color:#000">robots.txt</div>
<div class="tx" style="left:522px;top:347px;font-size:12.5px;line-height:19px;letter-spacing:.37px;color:#000">Oct 25, 2009 8:43 PM</div>
<div class="tx" style="left:640px;width:132.5px;text-align:right;top:347px;font-size:12.5px;line-height:19px;letter-spacing:.25px;color:#000">4 KB</div>
<div class="tx" style="left:800px;top:347px;font-size:12.5px;line-height:19px;letter-spacing:.2px;color:#000">Plain Text</div>
<div class="a" style="left:968px;top:102px;width:1px;height:507px;background:#8a8a8a"></div>
<div class="a" style="left:208px;top:586px;width:761px;height:23px;background:#dfe5ec;border-top:1px solid #a0a0a0"></div>
<svg class="a" style="left:221px;top:590px" width="14" height="15"><use href="#hd"/></svg>
<div class="tx" style="left:240px;top:589px;font-size:11.5px;line-height:16px;letter-spacing:.1px">Macho</div>
<div class="a" style="left:280px;top:594px;width:0;height:0;border-top:3.5px solid transparent;border-bottom:3.5px solid transparent;border-left:5px solid #9aa3ad"></div>
<svg class="a" style="left:291px;top:590px" width="16" height="14"><use href="#folderUser"/></svg>
<div class="tx" style="left:311px;top:589px;font-size:11.5px;line-height:16px;letter-spacing:.1px">Users</div>
<div class="a" style="left:346px;top:594px;width:0;height:0;border-top:3.5px solid transparent;border-bottom:3.5px solid transparent;border-left:5px solid #9aa3ad"></div>
<svg class="a" style="left:358px;top:589px" width="16" height="16"><use href="#home"/></svg>
<div class="tx" style="left:377px;top:589px;font-size:11.5px;line-height:16px;letter-spacing:.1px">darwin</div>
<div class="a" style="left:418px;top:594px;width:0;height:0;border-top:3.5px solid transparent;border-bottom:3.5px solid transparent;border-left:5px solid #9aa3ad"></div>
<svg class="a" style="left:429px;top:590px" width="16" height="14"><use href="#folder"/></svg>
<div class="tx" style="left:449px;top:589px;font-size:11.5px;line-height:16px;letter-spacing:.1px">code</div>
<div class="a" style="left:480px;top:594px;width:0;height:0;border-top:3.5px solid transparent;border-bottom:3.5px solid transparent;border-left:5px solid #9aa3ad"></div>
<svg class="a" style="left:491px;top:590px" width="16" height="14"><use href="#folder"/></svg>
<div class="tx" style="left:511px;top:589px;font-size:11.5px;line-height:16px;letter-spacing:.1px">binaryage</div>
<div class="a" style="left:14px;top:609px;width:955px;height:24px;background:linear-gradient(#d3d3d3,#a9a9a9);border-top:1px solid #666;border-radius:0 0 3px 3px"></div>
<div class="tx" style="left:14px;width:955px;text-align:center;top:613px;font-size:11px;line-height:16px;letter-spacing:.3px;color:#1a1a1a">204.86 GB available</div>
<div class="a" style="left:17px;top:633px;width:950px;height:7px;background:linear-gradient(#7a7a7a,#a2a2a2 30%,#a8a8a8)"></div>
<svg class="a" style="left:954px;top:619px" width="14" height="14" viewBox="0 0 14 14"><path d="M3 13L13 3M7 13L13 7M11 13L13 11" stroke="#7a7a7a" stroke-width="1"/><path d="M4 13L13 4M8 13L13 8" stroke="#e0e0e0" stroke-width=".8"/></svg>
<svg class="a" style="left:956px;top:14px" width="26" height="26" viewBox="0 0 26 26" style="overflow:visible"><circle cx="12.8" cy="12.3" r="11.2" fill="rgba(0,0,0,.12)"/><circle cx="12.8" cy="12" r="10.6" fill="#fff"/><circle cx="12.8" cy="12" r="9.1" fill="#000"/><path d="M8.3 7.5L17.3 16.5M17.3 7.5L8.3 16.5" stroke="#fff" stroke-width="3.3" stroke-linecap="round"/></svg>
<div class="tx" style="left:848px;top:608px;font-size:24px;line-height:30px;font-style:italic;color:#111;-webkit-text-stroke:.45px #c0c0c0;transform-origin:0 0;transform:scaleX(.875)">WaitsUn.com</div>
</body></html>
